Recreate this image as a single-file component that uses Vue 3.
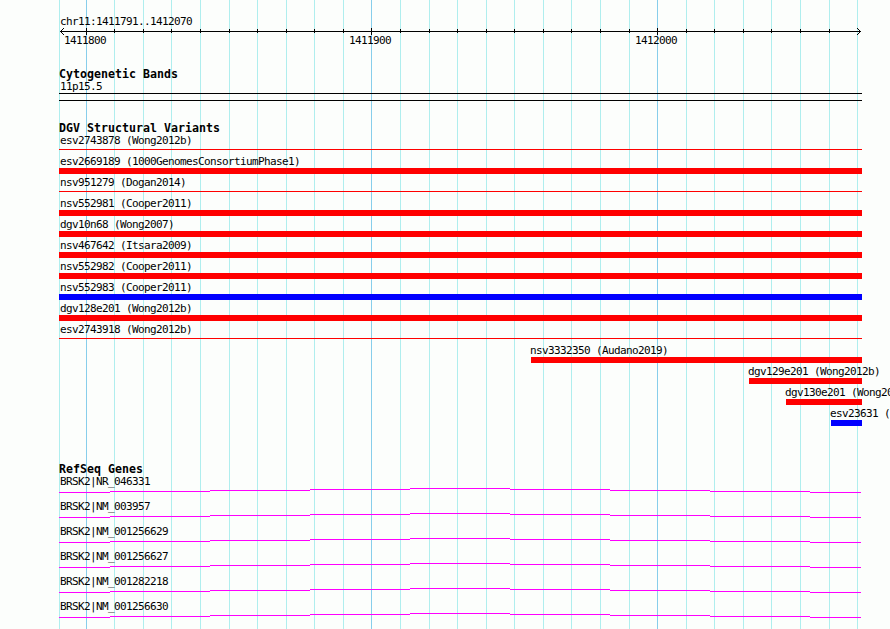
<template>
  <div class="browser">
    <svg class="grid" width="890" height="629">
      <rect
        v-for="line in gridLines"
        :key="line"
        :class="['grid-line', { major: majorLines.includes(line) }]"
        :x="line"
        y="0"
        width="1"
        height="629"
      />
    </svg>

    <section class="ruler">
      <div class="label region">chr11:1411791..1412070</div>
      <svg class="axis" width="804" height="9">
        <rect x="1" y="4" width="801" height="1" />
        <rect
          v-for="line in gridLines.slice(1, -1)"
          :key="line"
          :x="line - 59"
          :y="majorLines.includes(line) ? 1 : 2"
          width="1"
          :height="majorLines.includes(line) ? 7 : 4"
        />
        <path d="M5 1 L1.5 4.5 L5 8 M798 1 L801.5 4.5 L798 8" />
      </svg>
      <div class="ticks">
        <span v-for="tick in ticks" :key="tick" class="label">{{ tick }}</span>
      </div>
    </section>

    <section class="bands">
      <h2>Cytogenetic Bands</h2>
      <div class="label">11p15.5</div>
      <div class="band"></div>
    </section>

    <section class="variants">
      <h2>DGV Structural Variants</h2>
      <div
        v-for="variant in variants"
        :key="variant.name"
        :class="['variant', { inset: variant.start > 0 }]"
        :style="{ marginLeft: variant.start + 'px' }"
      >
        <div class="label">{{ variant.name }}</div>
        <div :class="['bar', variant.kind]"></div>
      </div>
    </section>

    <section class="genes">
      <h2>RefSeq Genes</h2>
      <div v-for="gene in genes" :key="gene" class="gene">
        <div class="label">{{ gene }}</div>
        <svg class="intron" width="802" height="5">
          <rect
            v-for="step in intronSteps"
            :key="step.x"
            :x="step.x"
            :y="step.y"
            :width="step.width"
            height="1"
          />
        </svg>
      </div>
    </section>
  </div>
</template>

<script setup>
const gridLines = [
  59, 86, 114, 143, 171, 200, 229, 257, 286, 314, 343, 371, 400, 429, 457,
  486, 514, 543, 571, 600, 629, 657, 686, 714, 743, 771, 800, 829, 857,
];
const majorLines = [86, 371, 657];
const ticks = ['1411800', '1411900', '1412000'];

const variants = [
  { name: 'esv2743878 (Wong2012b)', start: 0, kind: 'thin' },
  { name: 'esv2669189 (1000GenomesConsortiumPhase1)', start: 0, kind: 'loss' },
  { name: 'nsv951279 (Dogan2014)', start: 0, kind: 'thin' },
  { name: 'nsv552981 (Cooper2011)', start: 0, kind: 'loss' },
  { name: 'dgv10n68 (Wong2007)', start: 0, kind: 'loss' },
  { name: 'nsv467642 (Itsara2009)', start: 0, kind: 'loss' },
  { name: 'nsv552982 (Cooper2011)', start: 0, kind: 'loss' },
  { name: 'nsv552983 (Cooper2011)', start: 0, kind: 'gain' },
  { name: 'dgv128e201 (Wong2012b)', start: 0, kind: 'loss' },
  { name: 'esv2743918 (Wong2012b)', start: 0, kind: 'thin' },
  { name: 'nsv3332350 (Audano2019)', start: 472, kind: 'loss' },
  { name: 'dgv129e201 (Wong2012b)', start: 690, kind: 'loss' },
  { name: 'dgv130e201 (Wong2012b)', start: 727, kind: 'loss' },
  { name: 'esv23631 (Conrad2009)', start: 772, kind: 'gain' },
];

const genes = [
  'BRSK2|NR_046331',
  'BRSK2|NM_003957',
  'BRSK2|NM_001256629',
  'BRSK2|NM_001256627',
  'BRSK2|NM_001282218',
  'BRSK2|NM_001256630',
];

// introns are drawn as a very flat hat, one pixel per step
const intronSteps = [
  { x: 0, y: 4, width: 51 },
  { x: 51, y: 3, width: 100 },
  { x: 151, y: 2, width: 100 },
  { x: 251, y: 1, width: 100 },
  { x: 351, y: 0, width: 100 },
  { x: 451, y: 1, width: 100 },
  { x: 551, y: 2, width: 100 },
  { x: 651, y: 3, width: 100 },
  { x: 751, y: 4, width: 51 },
];
</script>

<style>
body {
  margin: 0;
  background: #fcfefc;
}
</style>

<style scoped>
.browser {
  position: relative;
  box-sizing: border-box;
  width: 890px;
  height: 629px;
  padding: 15px 0 0 59px;
  overflow: hidden;
  background: #fcfefc;
  color: #000;
  font-family: "DejaVu Sans Mono", monospace;
}

svg {
  display: block;
}

.grid {
  position: absolute;
  top: 0;
  left: 0;
}

.grid-line {
  fill: #afeeee;
}

.grid-line.major {
  fill: #87ceeb;
}

section {
  position: relative;
  width: 803px;
}

.label {
  height: 13px;
  padding-left: 1px;
  font-size: 11px;
  line-height: 13px;
  letter-spacing: -0.62px;
  white-space: nowrap;
}

h2 {
  height: 12px;
  margin: 0;
  font-size: 11.6px;
  font-weight: bold;
  line-height: 13px;
  letter-spacing: 0.02px;
  white-space: nowrap;
}

.ruler {
  height: 53px;
}

.region {
  height: 12px;
}

.axis path {
  fill: none;
  stroke: #000;
}

.ticks {
  display: grid;
  grid-template-columns: 285px 286px auto;
  margin-top: -2px;
  padding-left: 4px;
}

.bands {
  height: 54px;
}

.band {
  height: 6px;
  border-top: 1px solid #000;
  border-bottom: 1px solid #000;
}

.variants {
  height: 341px;
}

.variant {
  height: 21px;
}

.variant.inset .label {
  margin-left: -1px;
  padding-left: 0;
}

.bar {
  height: 6px;
  background: #f00;
}

.bar.gain {
  background: #00f;
}

.bar.thin {
  height: 1px;
  margin-top: 2px;
}

.gene {
  height: 25px;
}

.intron {
  fill: #f0f;
}
</style>
